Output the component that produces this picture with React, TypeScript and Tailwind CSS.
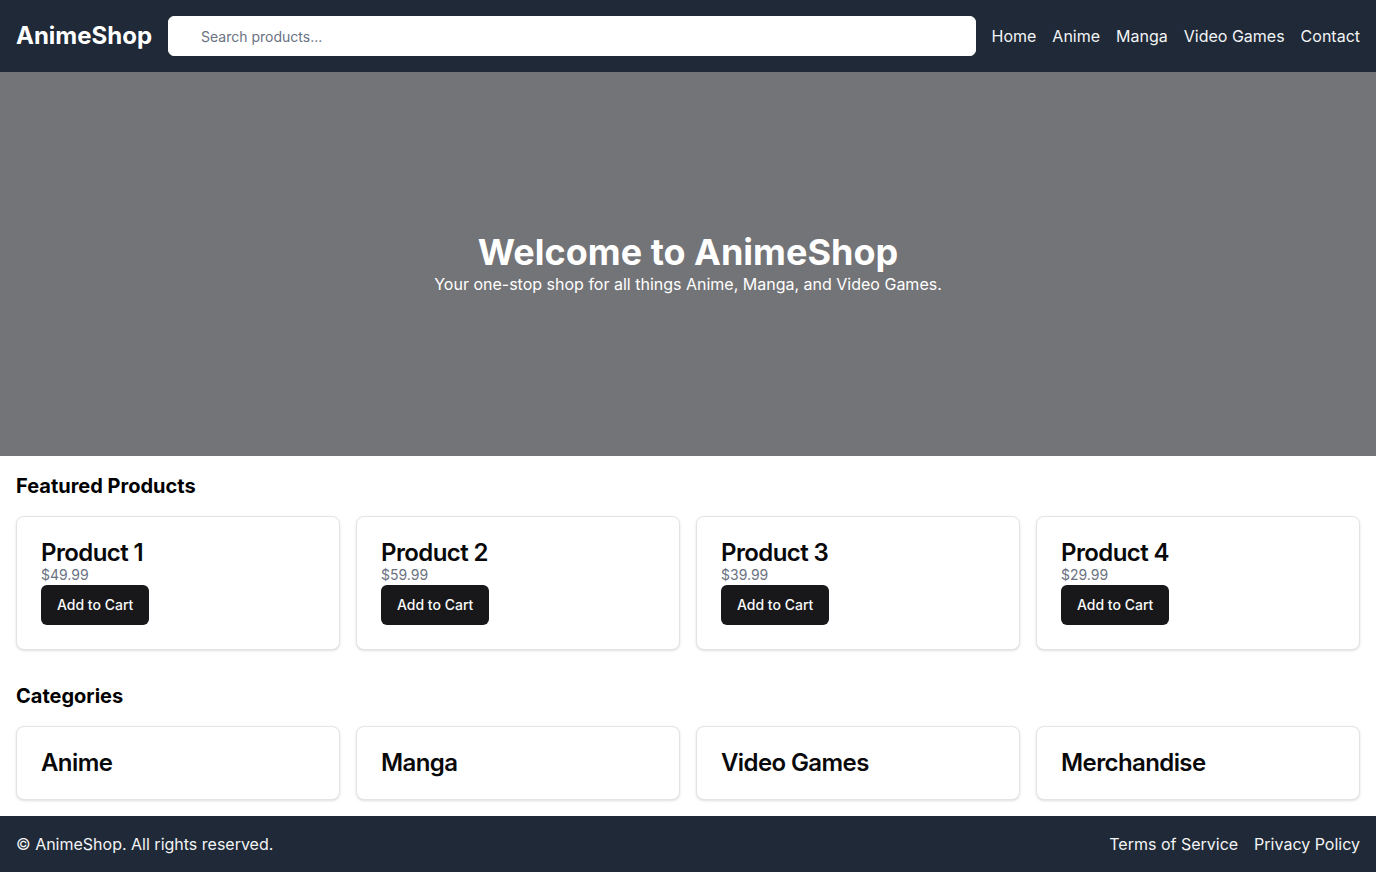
const products = [
  { name: 'Product 1', price: '$49.99' },
  { name: 'Product 2', price: '$59.99' },
  { name: 'Product 3', price: '$39.99' },
  { name: 'Product 4', price: '$29.99' },
]

const categories = ['Anime', 'Manga', 'Video Games', 'Merchandise']

const navLinks = ['Home', 'Anime', 'Manga', 'Video Games', 'Contact']

function Card({ children }: { children: React.ReactNode }) {
  return (
    <div className="rounded-lg border border-[#e4e4e7] bg-white p-6 text-[#09090b] shadow-sm">{children}</div>
  )
}

export default function App() {
  return (
    <div className="flex min-h-screen flex-col bg-white font-['Inter',sans-serif]">
      <header className="flex h-[72px] items-center gap-4 bg-[#1f2937] px-4 text-white">
        <span className="text-2xl font-bold">AnimeShop</span>
        <input
          type="text"
          placeholder="Search products..."
          className="h-10 flex-1 rounded-md border border-white bg-white pl-8 pr-3 text-sm text-gray-900 placeholder:text-gray-500 outline-none"
        />
        <nav className="flex gap-4 text-base text-gray-100">
          {navLinks.map((l) => (
            <a key={l} href="#">
              {l}
            </a>
          ))}
        </nav>
      </header>

      <section className="flex h-[384px] flex-col items-center justify-center bg-[#737477] text-center text-white">
        <h1 className="text-4xl font-bold">Welcome to AnimeShop</h1>
        <p className="text-base">Your one-stop shop for all things Anime, Manga, and Video Games.</p>
      </section>

      <section className="p-4">
        <h2 className="mb-4 text-xl font-bold text-black">Featured Products</h2>
        <div className="grid grid-cols-4 gap-4">
          {products.map((p) => (
            <Card key={p.name}>
              <h3 className="text-2xl font-semibold leading-none tracking-tight">{p.name}</h3>
              <p className="text-sm text-gray-500">{p.price}</p>
              <button className="h-10 rounded-md bg-[#18181b] px-4 text-sm font-medium text-[#fafafa]">
                Add to Cart
              </button>
            </Card>
          ))}
        </div>
      </section>

      <section className="p-4">
        <h2 className="mb-4 text-xl font-bold text-black">Categories</h2>
        <div className="grid grid-cols-4 gap-4">
          {categories.map((c) => (
            <Card key={c}>
              <h3 className="text-2xl font-semibold leading-none tracking-tight">{c}</h3>
            </Card>
          ))}
        </div>
      </section>

      <footer className="mt-auto flex items-center justify-between bg-[#1f2937] p-4 text-base text-gray-100">
        <span>© AnimeShop. All rights reserved.</span>
        <div className="flex gap-4">
          <a href="#">Terms of Service</a>
          <a href="#">Privacy Policy</a>
        </div>
      </footer>
    </div>
  )
}
